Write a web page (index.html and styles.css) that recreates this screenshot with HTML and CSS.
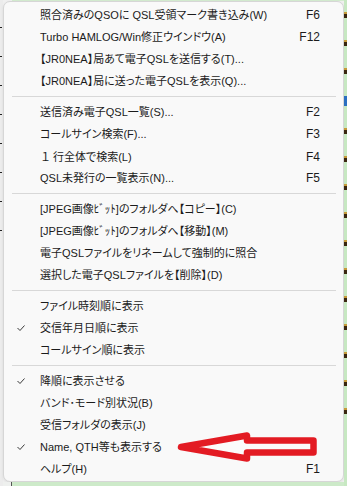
FILE: index.html
```html
<!DOCTYPE html>
<html lang="ja">
<head>
<meta charset="utf-8">
<title>Menu</title>
<link rel="stylesheet" href="styles.css">
</head>
<body>
<div class="app">
  <div class="left-strip">
    <i class="tick t1"></i><i class="tick t2"></i><i class="tick t3"></i><i class="tick t4"></i><i class="tick t5"></i><i class="tick t6"></i><i class="tick t7"></i><i class="tick t8"></i>
  </div>
  <div class="center">
    <div class="top-line"></div>
    <div class="menu">
      <div class="item"><span class="check"></span><span class="label">照合済みのQSOに QSL受領マーク書き込み(W)</span><span class="key">F6</span></div>
      <div class="item"><span class="check"></span><span class="label">Turbo HAMLOG/Win修正ウインドウ(A)</span><span class="key">F12</span></div>
      <div class="item"><span class="check"></span><span class="label">【JR0NEA】局あて電子QSLを送信する(T)...</span><span class="key"></span></div>
      <div class="item"><span class="check"></span><span class="label">【JR0NEA】局に送った電子QSLを表示(Q)...</span><span class="key"></span></div>
      <div class="sep"></div>
      <div class="item"><span class="check"></span><span class="label">送信済み電子QSL一覧(S)...</span><span class="key">F2</span></div>
      <div class="item"><span class="check"></span><span class="label">コールサイン検索(F)...</span><span class="key">F3</span></div>
      <div class="item"><span class="check"></span><span class="label"><span class="fw">１</span>行全体で検索(L)</span><span class="key">F4</span></div>
      <div class="item"><span class="check"></span><span class="label">QSL未発行の一覧表示(N)...</span><span class="key">F5</span></div>
      <div class="sep"></div>
      <div class="item"><span class="check"></span><span class="label">[JPEG画像ﾋﾞｯﾄ]のフォルダへ【コピー】(C)</span><span class="key"></span></div>
      <div class="item"><span class="check"></span><span class="label">[JPEG画像ﾋﾞｯﾄ]のフォルダへ【移動】(M)</span><span class="key"></span></div>
      <div class="item"><span class="check"></span><span class="label">電子QSLファイルをリネームして強制的に照合</span><span class="key"></span></div>
      <div class="item"><span class="check"></span><span class="label">選択した電子QSLファイルを【削除】(D)</span><span class="key"></span></div>
      <div class="sep"></div>
      <div class="item"><span class="check"></span><span class="label">ファイル時刻順に表示</span><span class="key"></span></div>
      <div class="item"><span class="check"><svg width="8" height="6" viewBox="0 0 8 6"><polyline points="0.5,3 3,5.5 7.5,0.5" fill="none" stroke="#3a3a3a" stroke-width="1"/></svg></span><span class="label">交信年月日順に表示</span><span class="key"></span></div>
      <div class="item"><span class="check"></span><span class="label">コールサイン順に表示</span><span class="key"></span></div>
      <div class="sep"></div>
      <div class="item"><span class="check"><svg width="8" height="6" viewBox="0 0 8 6"><polyline points="0.5,3 3,5.5 7.5,0.5" fill="none" stroke="#3a3a3a" stroke-width="1"/></svg></span><span class="label">降順に表示させる</span><span class="key"></span></div>
      <div class="item"><span class="check"></span><span class="label">バンド･モード別状況(B)</span><span class="key"></span></div>
      <div class="item"><span class="check"></span><span class="label">受信フォルダの表示(J)</span><span class="key"></span></div>
      <div class="item"><span class="check"><svg width="8" height="6" viewBox="0 0 8 6"><polyline points="0.5,3 3,5.5 7.5,0.5" fill="none" stroke="#3a3a3a" stroke-width="1"/></svg></span><span class="label">Name, QTH等も表示する</span><span class="key"></span></div>
      <div class="item"><span class="check"></span><span class="label">ヘルプ(H)</span><span class="key">F1</span></div>
    </div>
    <div class="bottom-line"></div>
  </div>
  <div class="right-strip">
    <i class="mark m1"></i><i class="mark m2"></i><i class="mark m3"></i><i class="mark blue"></i><i class="mark m4"></i><i class="mark m5"></i><i class="mark m6"></i><i class="mark m7"></i><i class="mark m8"></i><i class="mark m9"></i><i class="mark m10"></i><i class="mark m11"></i><i class="mark m12"></i><i class="mark m13"></i><i class="mark m14"></i>
  </div>
  <svg class="arrow" width="347" height="486" viewBox="0 0 347 486">
    <polygon points="181,447 247,435.5 247,440.5 313.5,440.5 313.5,452.5 247,452.5 247,458.5" fill="#fbfbfb" stroke="#e31b23" stroke-width="6.5" stroke-linejoin="round"/>
  </svg>
</div>
</body>
</html>
```

FILE: styles.css
```css
* { box-sizing: border-box; }
html, body { margin: 0; padding: 0; }
body {
  width: 347px;
  height: 486px;
  overflow: hidden;
  background: #f0f0f0;
  font-family: "Liberation Sans", "Noto Sans CJK JP", sans-serif;
}
.app {
  position: relative;
  display: flex;
  width: 347px;
  height: 486px;
}
.left-strip {
  width: 3px;
  flex: none;
  background: #ececec;
  display: flex;
  flex-direction: column;
  padding-top: 27px;
  gap: 28px;
}
.tick {
  display: block;
  width: 2px;
  height: 1px;
  background: #222;
}
.center {
  flex: none;
  width: 341px;
  display: flex;
  flex-direction: column;
}
.top-line {
  height: 1px;
  background: linear-gradient(to right, #f0f0f0 0 9px, #d4ecd0 9px);
}
.bottom-line {
  flex: 1;
  background: linear-gradient(to right, #eef0ee 0 8px, #555 8px 9px, #cdeac9 9px);
}
.menu {
  background: #f9f9f9;
  border: 1px solid #d6d6d6;
  border-radius: 7px;
  padding: 2px 0 1px 0;
  box-shadow: 0 1px 3px rgba(0,0,0,0.08);
}
.item {
  display: grid;
  grid-template-columns: 36px 1fr auto;
  align-items: center;
  height: 22px;
  padding-right: 23px;
  font-size: 11px;
  line-height: 22px;
  color: #1b1b1b;
  font-feature-settings: "palt";
  white-space: nowrap;
}
.key { font-size: 12px; }
.fw {
  font-family: "Noto Sans CJK JP", sans-serif;
  font-feature-settings: normal;
  margin-right: 2px;
}
.check {
  display: flex;
  align-items: center;
  padding-left: 13px;
  height: 22px;
}
.check svg { display: block; }
.key {
  text-align: right;
  color: #1b1b1b;
}
.sep {
  height: 9px;
  margin: 0 7px 0 8px;
  background: linear-gradient(#d8d8d8, #d8d8d8) 0 4px / 100% 1px no-repeat;
}
.right-strip {
  width: 3px;
  flex: none;
  background: #c7e8c2;
  display: flex;
  flex-direction: column;
  padding-top: 12px;
  gap: 22px;
}
.mark {
  display: block;
  width: 3px;
  height: 6px;
  background: linear-gradient(#c69a3a 0 2px, #3a2710 2px);
}
.mark.blue {
  height: 10px;
  background: #2b6fc0;
}
.arrow {
  position: absolute;
  left: 0;
  top: 0;
  pointer-events: none;
}
```
